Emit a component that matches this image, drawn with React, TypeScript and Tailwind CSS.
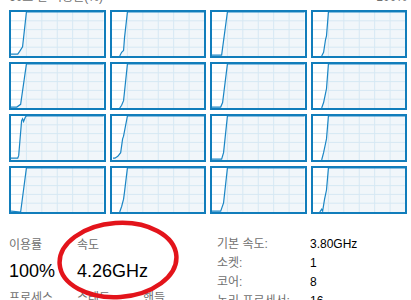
import React from 'react';

type Pt = [number, number];

// each graph: how the line climbs before it sits on 100%
const graphs: Pt[][] = [
  [[0, 46], [7, 46], [9, 43], [12, 38], [16, 0]],
  [[8, 48], [10, 44], [12, 42], [13, 28], [16, 0]],
  [[0, 47], [10, 47], [16, 0]],
  [[9, 48], [11, 44], [13, 30], [14, 26], [16, 0]],
  [[0, 47], [6, 47], [10, 44], [16, 0]],
  [[8, 48], [10, 45], [12, 40], [13, 30], [16, 0]],
  [[0, 47], [9, 47], [11, 42], [16, 0]],
  [[9, 48], [11, 42], [13, 32], [14, 27], [16, 0]],
  [[0, 46], [7, 46], [8, 43], [11, 5], [12, 3], [13, 6], [15, 1], [16, 0]],
  [[1, 46], [3, 46], [6, 44], [9, 40], [11, 25], [12, 22], [16, 0]],
  [[0, 47], [10, 47], [12, 40], [16, 0]],
  [[9, 48], [11, 40], [13, 30], [14, 25], [16, 0]],
  [[0, 47], [10, 48], [16, 0]],
  [[8, 48], [10, 42], [12, 34], [13, 26], [16, 0]],
  [[0, 47], [9, 47], [12, 38], [16, 0]],
  [[7, 48], [9, 45], [10, 47], [12, 34], [14, 24], [16, 0]],
];

const Chart: React.FC<{ pts: Pt[] }> = ({ pts }) => {
  const line = [...pts, [96, 0] as Pt].map(([x, y]) => `${x},${y}`).join(' ');
  const area = `${pts[0][0]},48 ${line} 96,48`;
  return (
    <div className="h-[48px] border-2 border-[#117dbb] bg-white">
      <svg viewBox="0 0 96 48" preserveAspectRatio="none" className="block h-full w-full">
        <polygon points={area} fill="#f1f6fa" />
        {[16, 32, 48, 64, 80].map((x) => (
          <line key={'v' + x} x1={x} x2={x} y1={0} y2={48} stroke="#d6e8f3" strokeWidth={1} vectorEffect="non-scaling-stroke" />
        ))}
        {[9.6, 19.2, 28.8, 38.4].map((y) => (
          <line key={'h' + y} x1={0} x2={96} y1={y} y2={y} stroke="#d6e8f3" strokeWidth={1} vectorEffect="non-scaling-stroke" />
        ))}
        <polyline points={line} fill="none" stroke="#1b86c5" strokeWidth={1.2} vectorEffect="non-scaling-stroke" />
      </svg>
    </div>
  );
};

const font = "font-['Liberation_Sans','Noto_Sans_CJK_KR',sans-serif]";

const App: React.FC = () => {
  const specs = [
    ['기본 속도:', '3.80GHz'],
    ['소켓:', '1'],
    ['코어:', '8'],
    ['논리 프로세서:', '16'],
  ];

  return (
    <div className={`relative h-[300px] w-[411px] overflow-hidden bg-white pl-[9px] pr-[4px] ${font}`}>
      {/* Header */}
      <div className="-mt-[11px] flex h-4 justify-between text-[12px] leading-[16px] text-[#707070]">
        <span>60초 간 이용률(%)</span>
        <span>100%</span>
      </div>

      {/* Logical processor graphs */}
      <div className="mt-[5px] grid grid-cols-4 gap-[4px]">
        {graphs.map((g, i) => (
          <Chart key={i} pts={g} />
        ))}
      </div>

      {/* Stats */}
      <div className="mt-[23px] flex">
        <div className="w-[208px]">
          <div className="flex">
            <div className="w-[68px]">
              <div className="text-[12px] leading-[16px] text-[#707070]">이용률</div>
              <div className="mt-[6px] text-[18px] leading-[24px] text-black">100%</div>
            </div>
            <div>
              <div className="text-[12px] leading-[16px] text-[#707070]">속도</div>
              <div className="mt-[6px] text-[18px] leading-[24px] text-black">4.26GHz</div>
            </div>
          </div>
          <div className="mt-[7px] flex text-[12px] leading-[16px] text-[#707070]">
            <div className="w-[68px]">프로세스</div>
            <div className="w-[66px]">스레드</div>
            <div>핸들</div>
          </div>
        </div>
        <div className="-mt-[2px] grid grid-cols-[93px_auto] text-[12px] leading-[19px]">
          {specs.map(([k, v]) => (
            <React.Fragment key={k}>
              <div className="text-[#707070]">{k}</div>
              <div className="text-black">{v}</div>
            </React.Fragment>
          ))}
        </div>
      </div>

      {/* Red marker circle */}
      <svg className="pointer-events-none absolute left-[54px] top-[218px]" width="130" height="86" viewBox="0 0 130 86">
        <ellipse cx="64" cy="42" rx="58.5" ry="37" fill="none" stroke="#e3141b" strokeWidth="4.5" transform="rotate(-4 64 42)" />
      </svg>
    </div>
  );
};

export default App;
